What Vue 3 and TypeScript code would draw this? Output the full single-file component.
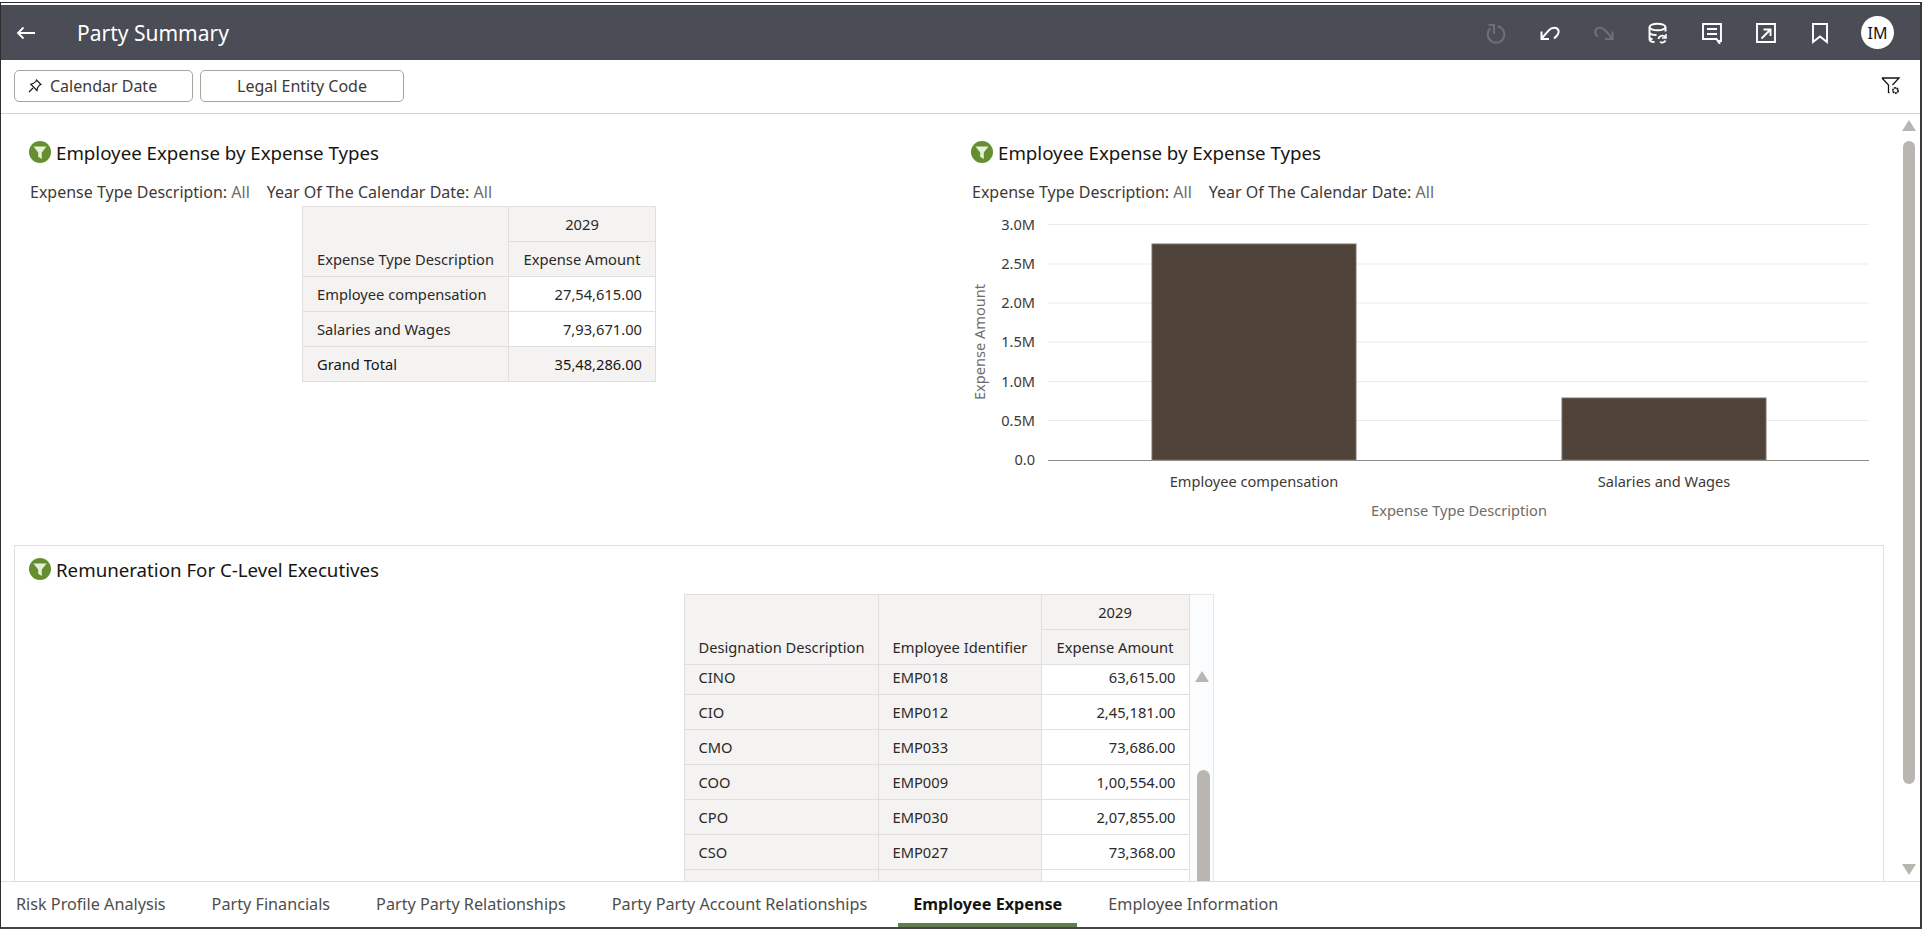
<script setup lang="ts">
interface ExecRow { role: string; id: string; amount: string }

const tabs: string[] = [
  'Risk Profile Analysis',
  'Party Financials',
  'Party Party Relationships',
  'Party Party Account Relationships',
  'Employee Expense',
  'Employee Information',
]
const activeTab = 'Employee Expense'

const execRows: ExecRow[] = [
  { role: 'CINO', id: 'EMP018', amount: '63,615.00' },
  { role: 'CIO', id: 'EMP012', amount: '2,45,181.00' },
  { role: 'CMO', id: 'EMP033', amount: '73,686.00' },
  { role: 'COO', id: 'EMP009', amount: '1,00,554.00' },
  { role: 'CPO', id: 'EMP030', amount: '2,07,855.00' },
  { role: 'CSO', id: 'EMP027', amount: '73,368.00' },
  { role: '', id: '', amount: '' },
]

const ticks = [
  { label: '3.0M', y: 224.5 },
  { label: '2.5M', y: 264 },
  { label: '2.0M', y: 303 },
  { label: '1.5M', y: 342 },
  { label: '1.0M', y: 381.5 },
  { label: '0.5M', y: 420.5 },
]
</script>

<template>
  <div class="frame">
    <header class="topbar">
      <svg class="back" width="20" height="14" viewBox="0 0 20 14"><path d="M19 7H2M7.500 1.500 2 7l5.500 5.500" fill="none" stroke="#fff" stroke-width="1.800" /></svg>
      <h1 class="page-title">Party Summary</h1>
      <div class="actions">
        <svg class="ic" viewBox="0 0 22 22" fill="none" stroke="#6d7076" stroke-width="2"><path d="M12.500 4.200a8.300 8.300 0 1 1-7 2" /><path d="M3.500 3H9v9" /></svg>
        <svg class="ic" viewBox="0 0 22 22" fill="none" stroke="#fff" stroke-width="2"><path d="M3 16 10 8.200C13 5 18 5 19.500 8.500 20.500 11 18 14 15 16.500" /><path d="M2.500 9.500V17H10" /></svg>
        <svg class="ic" viewBox="0 0 22 22" fill="none" stroke="#6d7076" stroke-width="2"><path d="M19 16 12 8.200C9 5 4 5 2.500 8.500 1.500 11 3 13 5 14.500" /><path d="M19.500 9.500V17H12" /></svg>
        <svg class="ic" viewBox="0 0 22 22" fill="none" stroke="#fff" stroke-width="1.900"><ellipse cx="10.500" cy="5" rx="8" ry="3.200" /><path d="M2.500 5v12c0 2 2.500 3 5 3M18.500 5v4.500M2.500 10c0 2 3 3 7 3M2.500 15c0 1 1 2 3 2.200" /><path d="M11.500 17a3.800 3.800 0 0 1 7-1.500M18.500 18.500a3.800 3.800 0 0 1-5.500 1.500" stroke-width="1.800" /><path d="M19 12v4h-4" stroke-width="1.500" /></svg>
        <svg class="ic" viewBox="0 0 22 22" fill="none" stroke="#fff" stroke-width="1.900"><path d="M2 2h18v17h-1.500v2.500L15.500 17H2z" /><path d="M6 7h10M6 12h10" /></svg>
        <svg class="ic" viewBox="0 0 22 22" fill="none" stroke="#fff" stroke-width="1.900"><path d="M2 2h18v18H2z" /><path d="M6.500 16.500 15 8M8.500 7.500H15.500V14" /></svg>
        <svg class="ic" viewBox="0 0 22 22" fill="none" stroke="#fff" stroke-width="1.900"><path d="M4 2h14v18l-7-5.500L4 20z" /></svg>
        <div class="avatar">IM</div>
      </div>
    </header>

    <div class="filterbar">
      <button class="chip chip-date" type="button">
        <svg width="14" height="14" viewBox="0 0 14 14" fill="none" stroke="#161513" stroke-width="1.100"><path d="M8.500 1 13 5.500 11.500 6 9.500 9 9 11.500 2.800 5.200 5 4.600 8 2.500z" /><path d="M5 9 1 13" /></svg>
        <span>Calendar Date</span>
      </button>
      <button class="chip chip-legal" type="button">Legal Entity Code</button>
      <svg class="filter-gear" width="20" height="20" viewBox="0 0 20 20" fill="none" stroke="#161513" stroke-width="1.300"><path d="M1 2h17l-6.500 7M1 2l6.500 7v8" /><path d="M7.500 17l1-.5" /><circle cx="14.500" cy="14.500" r="2.600" stroke-width="1.800" stroke-dasharray="2 .6" /></svg>
    </div>

    <main class="content">
      <div class="top-row">
        <section class="col col-left">
          <div class="title-row">
            <svg class="funnel" viewBox="0 0 22 22"><circle cx="11" cy="11" r="11" fill="#658f2e" /><path d="M4.500 5.500h13L12.800 11.500V18l-3.600-2.200v-4.300z" fill="#e6efd8" /></svg>
            <h2>Employee Expense by Expense Types</h2>
          </div>
          <p class="filters"><span>Expense Type Description:</span> <em>All</em><span class="sep">Year Of The Calendar Date:</span> <em>All</em></p>
          <table class="pivot pivot-top">
            <thead>
              <tr><th class="blank" rowspan="2"><span>Expense Type Description</span></th><th class="c">2029</th></tr>
              <tr><th class="c">Expense Amount</th></tr>
            </thead>
            <tbody>
              <tr><th>Employee compensation</th><td>27,54,615.00</td></tr>
              <tr><th>Salaries and Wages</th><td>7,93,671.00</td></tr>
              <tr class="grand"><th>Grand Total</th><td>35,48,286.00</td></tr>
            </tbody>
          </table>
        </section>

        <section class="col col-right">
          <div class="title-row">
            <svg class="funnel" viewBox="0 0 22 22"><circle cx="11" cy="11" r="11" fill="#658f2e" /><path d="M4.500 5.500h13L12.800 11.500V18l-3.600-2.200v-4.300z" fill="#e6efd8" /></svg>
            <h2>Employee Expense by Expense Types</h2>
          </div>
          <p class="filters"><span>Expense Type Description:</span> <em>All</em><span class="sep">Year Of The Calendar Date:</span> <em>All</em></p>
          <svg class="chart" width="930" height="330" viewBox="958 206 930 330">
            <line v-for="t in ticks" :key="t.label" x1="1048" x2="1869" :y1="t.y" :y2="t.y" stroke="#e9ebee" stroke-width="1.200" />
            <text v-for="t in ticks" :key="'l' + t.label" x="1035" :y="t.y + 5" text-anchor="end" class="tick">{{ t.label }}</text>
            <text x="1035" y="465" text-anchor="end" class="tick">0.0</text>
            <rect x="1152" y="244" width="204" height="216" fill="#4f4239" stroke="#7b716a" stroke-width="1" />
            <rect x="1562" y="398" width="204" height="62" fill="#4f4239" stroke="#7b716a" stroke-width="1" />
            <line x1="1048" x2="1869" y1="460.500" y2="460.500" stroke="#8e8c8a" stroke-width="1" />
            <text x="1254" y="487" text-anchor="middle" class="tick">Employee compensation</text>
            <text x="1664" y="487" text-anchor="middle" class="tick">Salaries and Wages</text>
            <text x="1459" y="516" text-anchor="middle" class="axis">Expense Type Description</text>
            <text transform="translate(985 342) rotate(-90)" text-anchor="middle" class="axis">Expense Amount</text>
          </svg>
        </section>
      </div>

      <section class="exec-panel">
        <div class="title-row">
          <svg class="funnel" viewBox="0 0 22 22"><circle cx="11" cy="11" r="11" fill="#658f2e" /><path d="M4.500 5.500h13L12.800 11.500V18l-3.600-2.200v-4.300z" fill="#e6efd8" /></svg>
          <h2>Remuneration For C-Level Executives</h2>
        </div>
        <div class="exec-wrap">
          <table class="pivot pivot-exec">
            <thead>
              <tr>
                <th class="blank col-a" rowspan="2"><span>Designation Description</span></th>
                <th class="blank col-b" rowspan="2"><span>Employee Identifier</span></th>
                <th class="c">2029</th>
              </tr>
              <tr><th class="c">Expense Amount</th></tr>
            </thead>
            <tbody>
              <tr v-for="(r, i) in execRows" :key="i" :class="{ first: i === 0 }">
                <th>{{ r.role }}</th>
                <th>{{ r.id }}</th>
                <td>{{ r.amount }}</td>
              </tr>
            </tbody>
          </table>
          <div class="exec-gutter">
            <span class="arrow-up exec-up"></span>
            <span class="exec-thumb"></span>
          </div>
        </div>
      </section>

      <div class="main-scroll">
        <span class="arrow-up"></span>
        <span class="main-thumb"></span>
        <span class="arrow-down"></span>
      </div>
    </main>

    <nav class="tabs">
      <a v-for="t in tabs" :key="t" class="tab" :class="{ active: t === activeTab }">{{ t }}</a>
    </nav>
  </div>
</template>

<style>
html, body { margin: 0; background: #fff; overflow: hidden; }
</style>

<style scoped>
.frame {
  box-sizing: border-box;
  width: 1922px;
  height: 927px;
  margin-top: 2px;
  padding-top: 2px;
  border-top: 1px solid #2e2e2e;
  border-left: 1px solid #2e2e2e;
  border-right: 2px solid #3a3a3a;
  border-bottom: 2px solid #444;
  display: flex;
  flex-direction: column;
  font-family: "Noto Sans", "Open Sans", sans-serif;
  color: #161513;
  background: #fff;
  overflow: hidden;
}
.topbar {
  flex: 0 0 55px;
  background: #4a4d55;
  display: flex;
  align-items: center;
  color: #fff;
}
.back { margin: 0 0 0 15px; flex: none; }
.page-title { margin: 0 0 0 41px; font-size: 21px; font-weight: 400; }
.actions { margin-left: auto; display: flex; align-items: center; gap: 32px; padding-right: 26px; }
.ic { width: 22px; height: 22px; flex: none; }
.avatar {
  width: 33px; height: 33px; border-radius: 50%; background: #fff; color: #161513;
  display: flex; align-items: center; justify-content: center; font-size: 16px; margin-left: -1.500px;
}
.filterbar {
  flex: 0 0 54px;
  box-sizing: border-box;
  border-bottom: 1px solid #d4d3d1;
  display: flex;
  align-items: center;
  padding: 0 0 1px 13px;
  gap: 7px;
}
.chip {
  box-sizing: border-box;
  height: 32px;
  border: 1px solid #a8a5a1;
  border-radius: 5px;
  background: #fff;
  font: inherit;
  font-size: 16px;
  color: #3d3a37;
  display: flex;
  align-items: center;
  justify-content: center;
  padding: 0;
}
.chip-date { width: 179px; gap: 8px; justify-content: flex-start; padding-left: 13px; }
.chip-legal { width: 204px; }
.filter-gear { margin-left: auto; margin-right: 19px; }
.content { flex: 1 1 0; min-height: 0; overflow: hidden; position: relative; padding-left: 13px; }
.top-row { display: flex; height: 431px; }
.col { flex: none; box-sizing: border-box; }
.col-left { width: 930px; padding: 26px 0 0 15px; }
.col-right { width: 930px; padding: 26px 0 0 15px; margin-left: 12px; }
.title-row { display: flex; align-items: center; gap: 5px; height: 24px; }
.funnel { width: 22px; height: 22px; flex: none; }
h2 { margin: 0; font-size: 18.700px; font-weight: 400; color: #161513; white-space: nowrap; }
.filters { margin: 16px 0 0 1px; font-size: 16px; line-height: 24px; color: #3d3a37; white-space: nowrap; }
.filters em { font-style: normal; color: #6f6c68; }
.sep { margin-left: 17px; }
.pivot { border-collapse: collapse; font-size: 14.700px; color: #2b2927; }
.pivot th, .pivot td {
  border: 1px solid #e0dfdd;
  height: 35px;
  padding: 0 13px 0 14px;
  box-sizing: border-box;
  white-space: nowrap;
  font-weight: 400;
}
.pivot th { background: #f4f3f2; text-align: left; }
.pivot th.c { text-align: center; padding: 0 4px; }
.pivot th.blank { vertical-align: bottom; padding-bottom: 7px; }
.pivot td { text-align: right; background: #fff; }
.pivot-top { margin: 2px 0 0 273px; width: 354px; table-layout: fixed; }
.pivot-top th:first-child { width: 206px; }
.grand th, .grand td { background: #f4f3f2; color: #161513; }
.chart { display: block; margin: 2px 0 0 -13px; }
.tick { font-size: 14.600px; fill: #3d3a37; font-family: "Noto Sans", sans-serif; }
.axis { font-size: 14.600px; fill: #6f6c68; font-family: "Noto Sans", sans-serif; }
.exec-panel {
  box-sizing: border-box;
  width: 1870px;
  height: 420px;
  border: 1px solid #e0dfdd;
  padding: 11px 0 0 14px;
}
.exec-wrap { display: flex; justify-content: center; margin: 13px 0 0 -15px; }
.pivot-exec { width: 506px; table-layout: fixed; }
.pivot-exec th.col-a { width: 194px; }
.pivot-exec th.col-b { width: 163px; }
.pivot-exec .first th, .pivot-exec .first td { height: 30px; padding-bottom: 5px; }
.exec-gutter {
  width: 24px;
  position: relative;
  box-sizing: border-box;
  background: #fbfcfd;
  border: 1px solid #e8e8e7;
  border-left: 0;
}
.arrow-up, .arrow-down {
  display: block;
  width: 0; height: 0;
  border-left: 7px solid transparent;
  border-right: 7px solid transparent;
}
.arrow-up { border-bottom: 11px solid #b9b5b0; }
.arrow-down { border-top: 11px solid #b9b5b0; }
.exec-up { position: absolute; left: 5px; top: 76px; }
.exec-thumb { position: absolute; left: 7px; top: 175px; width: 13px; height: 300px; background: #b9b5b0; border-radius: 7px; }
.main-scroll { position: absolute; right: 4px; top: 0; bottom: 0; width: 14px; }
.main-scroll .arrow-up { position: absolute; top: 6px; left: 0; }
.main-scroll .arrow-down { position: absolute; top: 750px; left: 0; }
.main-thumb { position: absolute; top: 27px; left: 1px; width: 12px; height: 643px; background: #b9b5b0; border-radius: 6px; }
.tabs {
  flex: 0 0 46px;
  box-sizing: border-box;
  border-top: 1px solid #dfdedc;
  display: flex;
  padding-left: 0;
  background: #fff;
  position: relative;
}
.tab {
  box-sizing: border-box;
  padding: 0 15px;
  margin-right: 16px;
  font-size: 16.200px;
  line-height: 44px;
  height: 45px;
  color: #4f4d4a;
  white-space: nowrap;
}
.tab.active { color: #161513; font-weight: 700; border-bottom: 4px solid #5f7d4f; }
</style>
